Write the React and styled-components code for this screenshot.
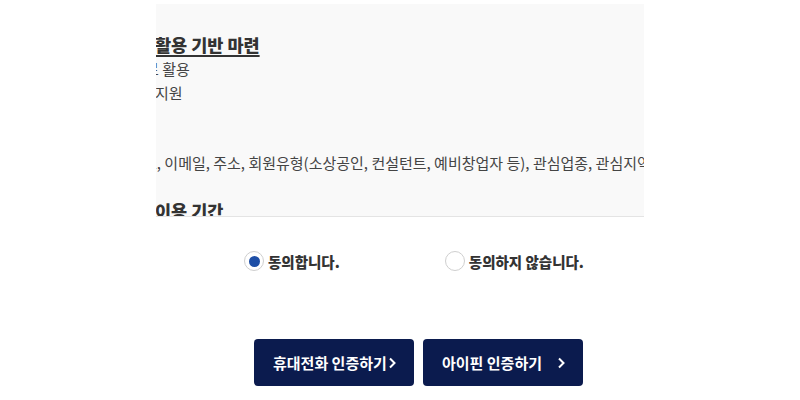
import styled, { createGlobalStyle } from "styled-components"

const GlobalStyle = createGlobalStyle`
    body {
        margin: 0;
        background: #ffffff;
        font-family: "Noto Sans CJK KR", "Noto Sans", sans-serif;
        color: #333333;
    }
`

const Page = styled.div`
    width: 800px;
    height: 400px;
    display: flex;
    flex-direction: column;
    overflow: hidden;
`

const TermsBox = styled.div`
    width: 488px;
    height: 213px;
    margin: 4px auto 0;
    padding-top: 29px;
    box-sizing: border-box;
    background: #f9f9f9;
    border-bottom: 1px solid #e4e4e4;
    overflow: hidden;
    display: flex;
    flex-direction: column;
`

const Heading = styled.div`
    height: 24px;
    line-height: 24px;
    font-size: 17.5px;
    font-weight: 900;
    color: #333333;
    white-space: nowrap;
    margin-left: ${(p) => p.shift || 0}px;
    text-decoration: ${(p) => (p.underline ? "underline" : "none")};
    text-underline-offset: 3px;
    text-decoration-thickness: 1.5px;
`

const Line = styled.div`
    height: 24px;
    line-height: 24px;
    font-size: 15px;
    color: #444444;
    white-space: nowrap;
    margin-left: ${(p) => p.shift || 0}px;
`

const Spacer = styled.div`
    flex-shrink: 0;
    height: ${(p) => p.size}px;
`

const AgreeRow = styled.div`
    display: flex;
    align-items: center;
    gap: 105px;
    margin-top: 34px;
    padding-left: 244px;
    height: 20px;
`

const RadioLabel = styled.label`
    display: flex;
    align-items: center;
    gap: 4px;
    font-size: 14.5px;
    font-weight: 900;
    color: #333333;
    cursor: pointer;
`

const RadioCircle = styled.span`
    width: 20px;
    height: 20px;
    box-sizing: border-box;
    border-radius: 50%;
    border: 1px solid #cfcfcf;
    background: #ffffff;
    display: flex;
    align-items: center;
    justify-content: center;

    &::after {
        content: "";
        width: 11px;
        height: 11px;
        border-radius: 50%;
        background: ${(p) => (p.checked ? "#1d4ea6" : "transparent")};
    }
`

const ButtonRow = styled.div`
    display: flex;
    gap: 9px;
    margin-top: 68px;
    padding-left: 254px;
`

const AuthButton = styled.button`
    width: 160px;
    height: 47px;
    border: none;
    border-radius: 4px;
    background: #0b1b4e;
    color: #ffffff;
    font-family: "Noto Sans CJK KR", "Noto Sans", sans-serif;
    font-size: 15px;
    font-weight: 700;
    padding: 0 0 0 19px;
    display: flex;
    align-items: center;
    position: relative;
    cursor: pointer;
    text-align: left;
    white-space: nowrap;
`

const Chevron = styled.svg`
    position: absolute;
    right: 17px;
    top: 50%;
    margin-top: -6px;
`

const Arrow = () => (
    <Chevron width="9" height="12" viewBox="0 0 9 12">
        <path d="M2 1.5 L6.5 6 L2 10.5" fill="none" stroke="#ffffff" strokeWidth="2" />
    </Chevron>
)

const App = () => {
    return (
        <Page>
            <GlobalStyle />
            <TermsBox>
                <Heading underline shift={-1}>활용 기반 마련</Heading>
                <Line shift={-11}>료 활용</Line>
                <Line shift={-1}>지원</Line>
                <Spacer size={46} />
                <Line shift={-13}>호, 이메일, 주소, 회원유형(소상공인, 컨설턴트, 예비창업자 등), 관심업종, 관심지역</Line>
                <Spacer size={24} />
                <Heading shift={-1}>이용 기간</Heading>
            </TermsBox>
            <AgreeRow>
                <RadioLabel>
                    <RadioCircle checked />
                    동의합니다.
                </RadioLabel>
                <RadioLabel>
                    <RadioCircle />
                    동의하지 않습니다.
                </RadioLabel>
            </AgreeRow>
            <ButtonRow>
                <AuthButton>
                    휴대전화 인증하기
                    <Arrow />
                </AuthButton>
                <AuthButton>
                    아이핀 인증하기
                    <Arrow />
                </AuthButton>
            </ButtonRow>
        </Page>
    )
}

export default App
